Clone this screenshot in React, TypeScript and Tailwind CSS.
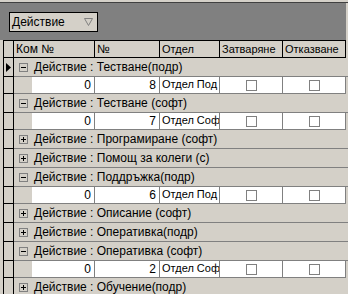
import React from "react";

type Row =
  | { kind: "group"; open: boolean; text: string; selected?: boolean }
  | { kind: "data"; kom: string; num: string; dept: string };

const rows: Row[] = [
  { kind: "group", open: true, text: "Действие : Тестване(подр)", selected: true },
  { kind: "data", kom: "0", num: "8", dept: "Отдел Под" },
  { kind: "group", open: true, text: "Действие : Тестване (софт)" },
  { kind: "data", kom: "0", num: "7", dept: "Отдел Соф" },
  { kind: "group", open: false, text: "Действие : Програмиране (софт)" },
  { kind: "group", open: false, text: "Действие : Помощ за колеги (с)" },
  { kind: "group", open: true, text: "Действие : Поддръжка(подр)" },
  { kind: "data", kom: "0", num: "6", dept: "Отдел Под" },
  { kind: "group", open: false, text: "Действие : Описание (софт)" },
  { kind: "group", open: false, text: "Действие : Оперативка(подр)" },
  { kind: "group", open: true, text: "Действие : Оперативка (софт)" },
  { kind: "data", kom: "0", num: "2", dept: "Отдел Соф" },
  { kind: "group", open: false, text: "Действие : Обучение(подр)" },
];

function Selector({ selected, h }: { selected?: boolean; h: string }) {
  return (
    <div className={`flex shrink-0 ${h}`}>
      <div className="w-[3px] bg-[#d4d0c8]" />
      <div className="w-[11px] border-l border-r border-b border-[#000] bg-[#d4d0c8] flex items-center justify-center">
        {selected && (
          <svg width="5" height="9" viewBox="0 0 5 9">
            <path d="M0 0 L5 4.5 L0 9 Z" fill="#000" />
          </svg>
        )}
      </div>
    </div>
  );
}

function Expander({ open }: { open: boolean }) {
  return (
    <div className="w-[9px] h-[9px] border border-[#808080] bg-[#d4d0c8] relative shrink-0">
      <div className="absolute left-[1px] top-[3px] w-[5px] h-[1px] bg-[#000]" />
      {!open && <div className="absolute left-[3px] top-[1px] w-[1px] h-[5px] bg-[#000]" />}
    </div>
  );
}

function Check() {
  return <div className="w-[11px] h-[11px] border border-[#808080] bg-white" />;
}

export default function App() {
  return (
    <div
      className="w-[348px] h-[294px] overflow-hidden bg-[#d4d0c8] text-[11px] text-black leading-none"
      style={{ fontFamily: '"Liberation Sans", Arial, sans-serif' }}
    >
      <div className="h-[3px] bg-[#d4d0c8] border-b border-[#404040]" />
      <div className="h-[37px] bg-[#808080] pl-[9px] pt-[9px] border-r-2 border-[#d4d0c8]">
        <div className="w-[89px] h-[20px] border border-black bg-[#d4d0c8] flex items-center pl-[2px] pr-[4px] justify-between text-[12px]">
          <span>Действие</span>
          <svg width="9" height="8" viewBox="0 0 9 8">
            <path d="M0.5 0.5 H8.5 L4.5 7.5 Z" fill="none" stroke="#808080" strokeWidth="1" />
          </svg>
        </div>
      </div>
      {/* header */}
      <div className="flex h-[18px]">
        <div className="flex shrink-0 h-[18px]">
          <div className="w-[3px] bg-[#d4d0c8]" />
          <div className="w-[11px] border-l border-r border-t border-b border-black bg-[#d4d0c8]" />
        </div>
        <div className="w-[81px] border-t border-b border-r border-black flex items-center pl-[2px] text-[12px]">Ком №</div>
        <div className="w-[65px] border-t border-b border-r border-black flex items-center pl-[2px] text-[12px]">№</div>
        <div className="w-[60px] border-t border-b border-r border-black flex items-center pl-[2px]">Отдел</div>
        <div className="w-[63px] border-t border-b border-r border-black flex items-center pl-[2px] whitespace-nowrap overflow-hidden">Затваряне</div>
        <div className="w-[63px] border-t border-b border-r border-black flex items-center pl-[2px] whitespace-nowrap overflow-hidden">Отказване</div>
      </div>
      {rows.map((r, i) =>
        r.kind === "group" ? (
          <div key={i} className="flex h-[19px]">
            <Selector selected={r.selected} h="h-[19px]" />
            <div className="flex-1 border-b border-[#808080] flex items-center pl-[5px] gap-[6px] whitespace-nowrap text-[12px]">
              <Expander open={r.open} />
              <span>{r.text}</span>
            </div>
          </div>
        ) : (
          <div key={i} className="flex h-[17px]">
            <Selector h="h-[17px]" />
            <div className="w-[18px] border-b border-[#808080]" />
            <div className="w-[63px] bg-white border-b border-r border-[#808080] flex items-center justify-end pr-[3px] pb-[1px] text-[12px]">{r.kom}</div>
            <div className="w-[65px] bg-white border-b border-r border-[#808080] flex items-center justify-end pr-[3px] pb-[1px] text-[12px]">{r.num}</div>
            <div className="w-[60px] bg-white border-b border-r border-[#808080] flex items-center pl-[2px] pb-[1px] whitespace-nowrap overflow-hidden">{r.dept}</div>
            <div className="w-[63px] bg-white border-b border-r border-[#808080] flex items-center justify-center"><Check /></div>
            <div className="w-[63px] bg-white border-b border-r border-[#808080] flex items-center justify-center"><Check /></div>
          </div>
        )
      )}
    </div>
  );
}
